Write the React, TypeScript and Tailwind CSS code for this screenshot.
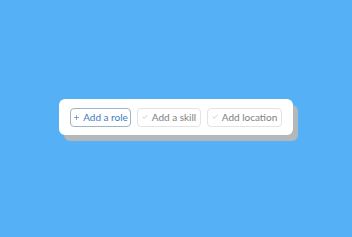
import { Plus, Check } from "lucide-react";

export default function App() {
  return (
    <div className="flex h-[237px] w-[352px] items-start justify-center bg-[#55b0f6] pt-[99px]" style={{ fontFamily: 'Lato, sans-serif' }}>
      <div className="flex h-[36px] items-center gap-[6px] whitespace-nowrap rounded-[6px] bg-white px-[11px] shadow-[5px_6px_1px_0_#b5b8bb]">
        <button className="flex h-[19px] w-[61px] items-center justify-center gap-[3px] rounded-[4px] border border-[#9fb3c4] text-[10px] leading-none text-[#3a7cbf]">
          <Plus className="h-[7px] w-[7px]" strokeWidth={2.2} />
          <span>Add a role</span>
        </button>
        <button className="flex h-[19px] w-[64px] items-center justify-center gap-[4px] rounded-[4px] border border-[#e3e3e3] text-[10px] leading-none text-[#808080]">
          <Check className="h-[6px] w-[6px] text-[#a0a0a0]" strokeWidth={2.2} />
          <span>Add a skill</span>
        </button>
        <button className="flex h-[19px] w-[75px] items-center justify-center gap-[4px] rounded-[4px] border border-[#e3e3e3] text-[10px] leading-none text-[#808080]">
          <Check className="h-[6px] w-[6px] text-[#a0a0a0]" strokeWidth={2.2} />
          <span>Add location</span>
        </button>
      </div>
    </div>
  );
}
